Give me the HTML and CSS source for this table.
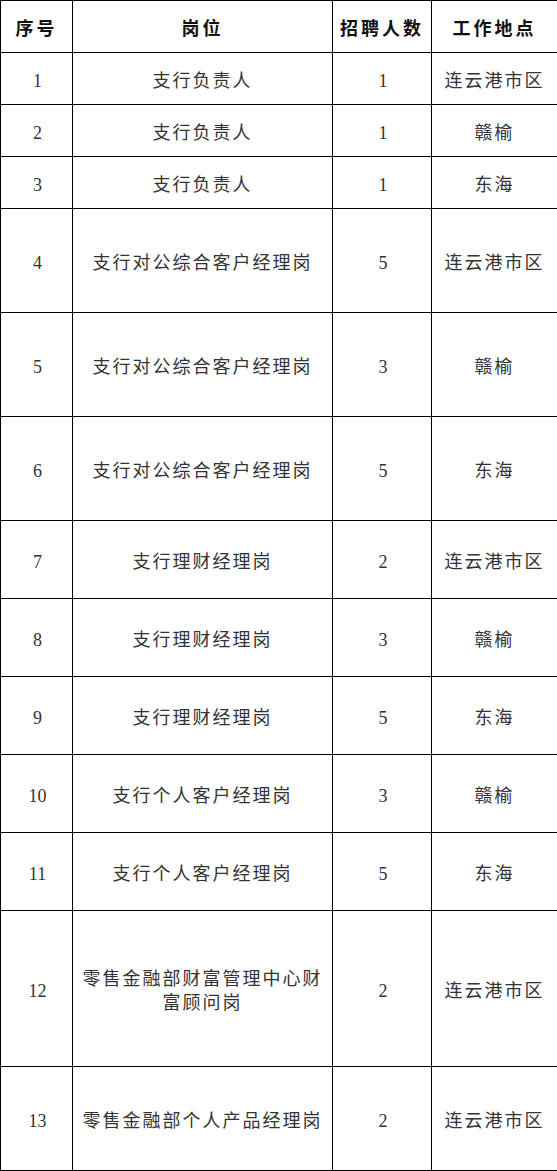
FILE: index.html
```html
<!DOCTYPE html>
<html lang="zh-CN">
<head>
<meta charset="utf-8">
<link rel="stylesheet" href="styles.css">
</head>
<body>
<table class="jobs">
  <colgroup>
    <col class="c-no"><col class="c-post"><col class="c-num"><col class="c-loc">
  </colgroup>
  <thead>
    <tr class="h52"><th>序号</th><th>岗位</th><th>招聘人数</th><th>工作地点</th></tr>
  </thead>
  <tbody>
    <tr class="h52"><td class="n">1</td><td>支行负责人</td><td class="n">1</td><td>连云港市区</td></tr>
    <tr class="h52"><td class="n">2</td><td>支行负责人</td><td class="n">1</td><td>赣榆</td></tr>
    <tr class="h52"><td class="n">3</td><td>支行负责人</td><td class="n">1</td><td>东海</td></tr>
    <tr class="h104"><td class="n">4</td><td>支行对公综合客户经理岗</td><td class="n">5</td><td>连云港市区</td></tr>
    <tr class="h104"><td class="n">5</td><td>支行对公综合客户经理岗</td><td class="n">3</td><td>赣榆</td></tr>
    <tr class="h104"><td class="n">6</td><td>支行对公综合客户经理岗</td><td class="n">5</td><td>东海</td></tr>
    <tr class="h78"><td class="n">7</td><td>支行理财经理岗</td><td class="n">2</td><td>连云港市区</td></tr>
    <tr class="h78"><td class="n">8</td><td>支行理财经理岗</td><td class="n">3</td><td>赣榆</td></tr>
    <tr class="h78"><td class="n">9</td><td>支行理财经理岗</td><td class="n">5</td><td>东海</td></tr>
    <tr class="h78"><td class="n">10</td><td>支行个人客户经理岗</td><td class="n">3</td><td>赣榆</td></tr>
    <tr class="h78"><td class="n">11</td><td>支行个人客户经理岗</td><td class="n">5</td><td>东海</td></tr>
    <tr class="h156"><td class="n">12</td><td>零售金融部财富管理中心财富顾问岗</td><td class="n">2</td><td>连云港市区</td></tr>
    <tr class="h104"><td class="n">13</td><td>零售金融部个人产品经理岗</td><td class="n">2</td><td>连云港市区</td></tr>
  </tbody>
</table>
</body>
</html>
```

FILE: styles.css
```css
html, body {
  margin: 0;
  padding: 0;
  background: #fff;
}
.jobs {
  border-collapse: collapse;
  width: 557px;
  table-layout: fixed;
  font-family: "Liberation Serif", "Noto Sans CJK SC", serif;
  font-size: 18px;
  color: #333;
}
.c-no { width: 72px; }
.c-post { width: 260px; }
.c-num { width: 99px; }
.c-loc { width: 126px; }
.jobs th, .jobs td {
  border: 1px solid #000;
  text-align: center;
  vertical-align: middle;
  padding: 4px 8px 0;
  letter-spacing: 2px;
  line-height: 24px;
}
.jobs td.n {
  letter-spacing: 0;
  padding-left: 9px;
  padding-right: 7px;
}
.jobs th {
  color: #111;
  font-weight: bold;
  letter-spacing: 3px;
  padding: 4px 4px 0;
}
.h52 { height: 52px; }
.h78 { height: 78px; }
.h104 { height: 104px; }
.h156 { height: 156px; }
```
